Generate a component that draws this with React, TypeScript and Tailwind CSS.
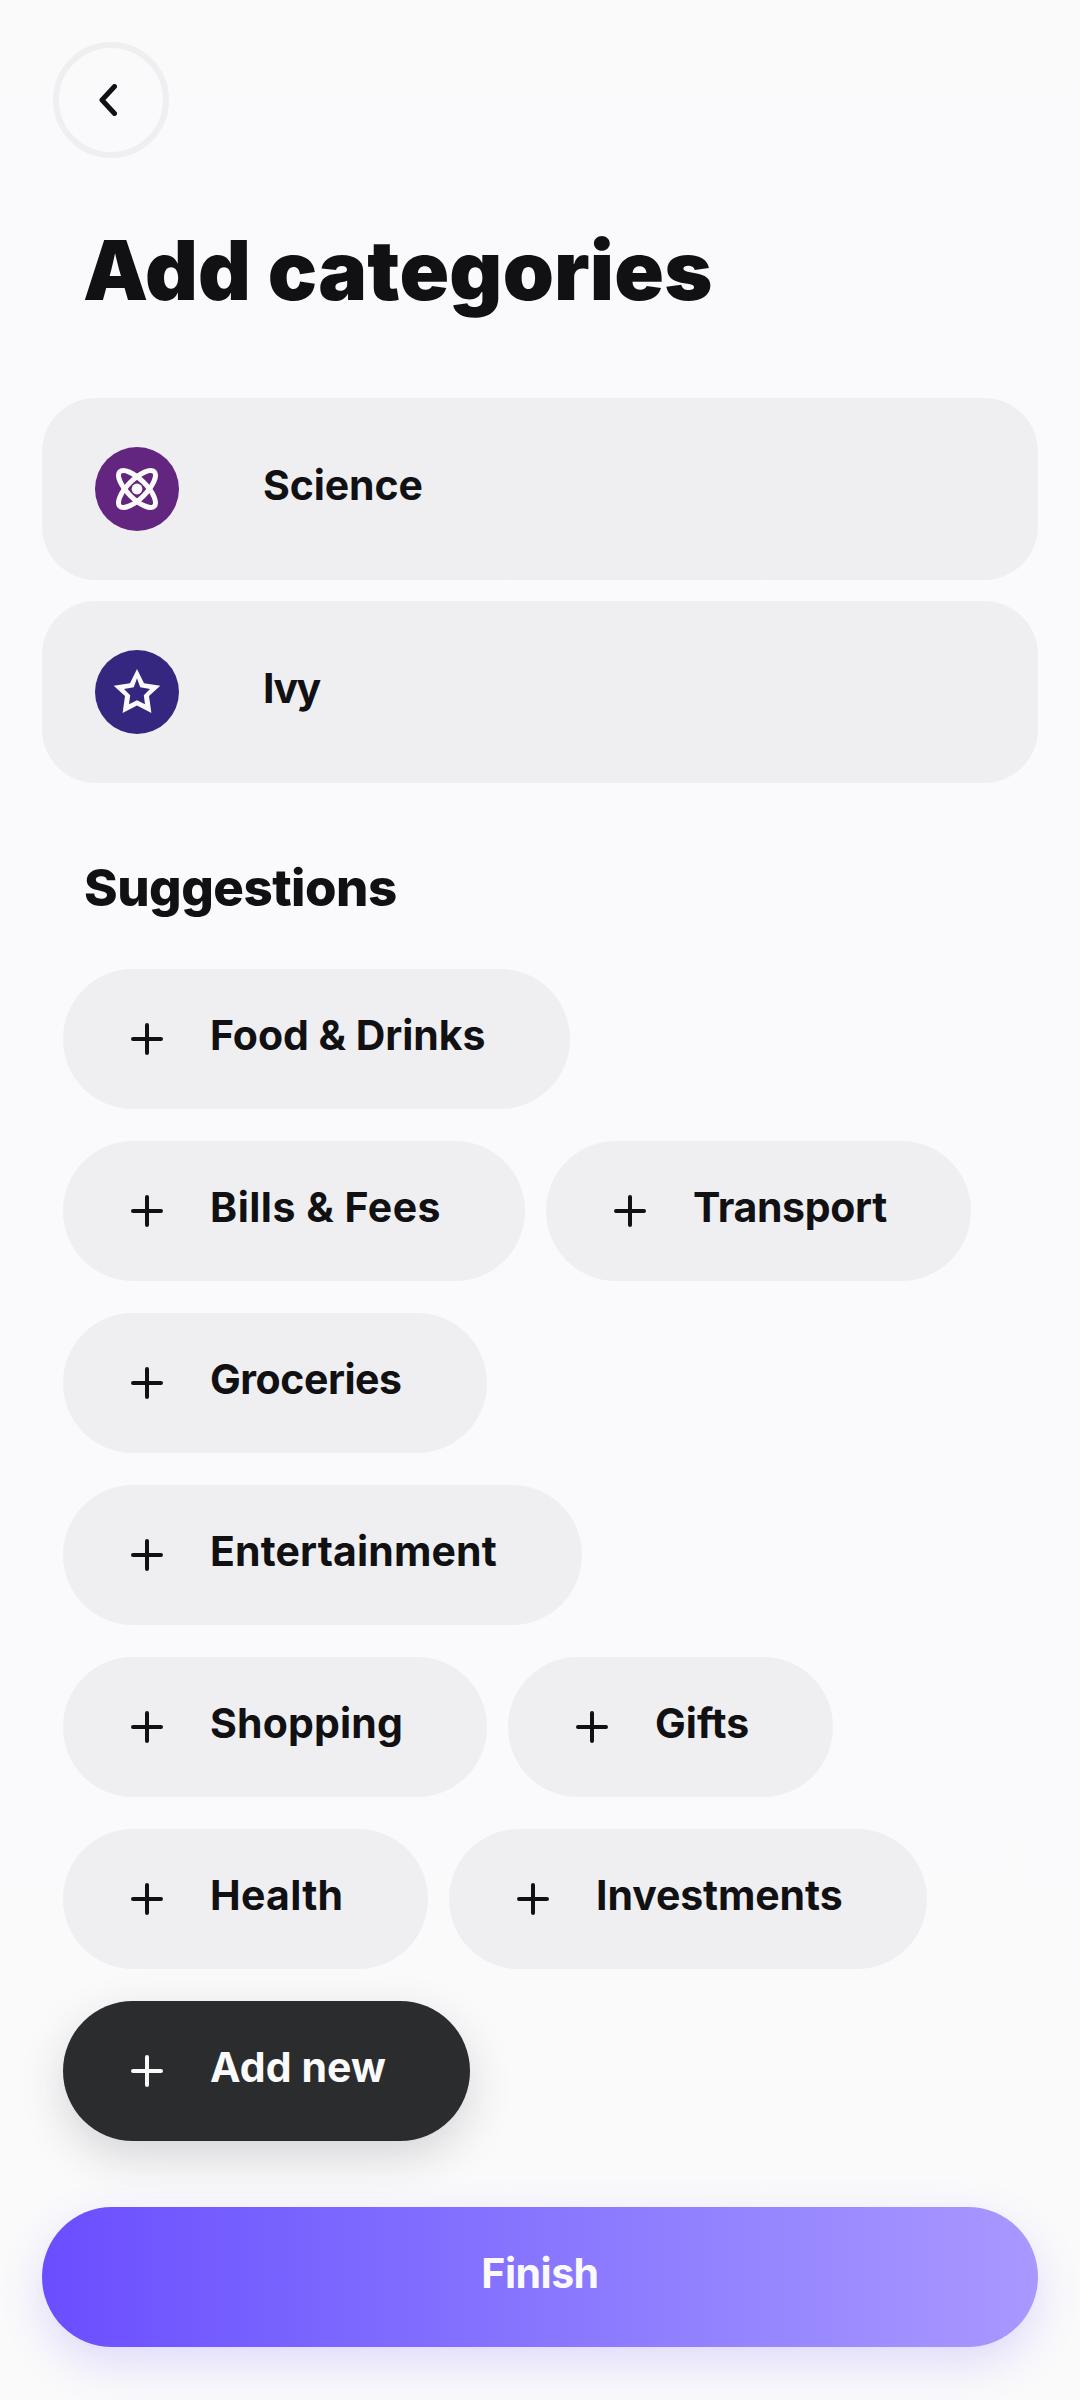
import type { ReactNode } from 'react';

type Item = { label: string; width: string; tracking: string };

const suggestionRows: Item[][] = [
  [{ label: 'Food & Drinks', width: 'w-[507px]', tracking: 'tracking-[-0.05px]' }],
  [
    { label: 'Bills & Fees', width: 'w-[462px]', tracking: 'tracking-[0.5px]' },
    { label: 'Transport', width: 'w-[425px]', tracking: 'tracking-[-0.35px]' },
  ],
  [{ label: 'Groceries', width: 'w-[424px]', tracking: 'tracking-[-0.45px]' }],
  [{ label: 'Entertainment', width: 'w-[519px]', tracking: 'tracking-[0.15px]' }],
  [
    { label: 'Shopping', width: 'w-[424px]', tracking: 'tracking-[0.15px]' },
    { label: 'Gifts', width: 'w-[325px]', tracking: 'tracking-[0px]' },
  ],
  [
    { label: 'Health', width: 'w-[365px]', tracking: 'tracking-[0.3px]' },
    { label: 'Investments', width: 'w-[478px]', tracking: 'tracking-[-0.1px]' },
  ],
];

function PlusIcon() {
  return (
    <svg className="size-8 shrink-0" viewBox="0 0 32 32" fill="none" stroke="currentColor" strokeWidth="4" strokeLinecap="round">
      <path d="M16 2v28M2 16h28" />
    </svg>
  );
}

function AtomIcon() {
  return (
    <svg className="size-full" viewBox="0 0 84 84" fill="none" stroke="#fafafa" strokeWidth="5">
      <ellipse cx="42" cy="42" rx="24.4" ry="9.4" transform="rotate(45 42 42)" />
      <ellipse cx="42" cy="42" rx="24.4" ry="9.4" transform="rotate(-45 42 42)" />
      <circle cx="42" cy="42" r="5.4" fill="#fafafa" stroke="none" />
    </svg>
  );
}

function StarIcon() {
  return (
    <svg className="size-full" viewBox="0 0 84 84" fill="#fafafa" fillRule="evenodd">
      <path d="M42 19L49 33.2L65.3 35.7L54 46L56.4 63L42 55.6L27.6 63L30 46L18.7 35.7L35 33.2ZM42 28.3L38.8 37.3L29 39L35.2 45.3L34 54.3L42 50.3L50 54.3L48.8 45.3L55 39L45.2 37.3Z" />
    </svg>
  );
}

function Category({ label, color, tracking, icon }: { label: string; color: string; tracking: string; icon: ReactNode }) {
  return (
    <div className="flex h-[182px] items-center gap-[84px] rounded-[54px] bg-[#efeff1] pl-[53px]">
      <span className={`size-[84px] rounded-full ${color}`}>{icon}</span>
      <span className={`pb-[6px] text-[41px] font-bold ${tracking}`}>{label}</span>
    </div>
  );
}

function Chip({ label, width, tracking, dark = false }: Item & { dark?: boolean }) {
  return (
    <button
      className={`flex h-[140px] items-center gap-[47px] rounded-full pl-[68px] ${width} ${
        dark ? 'bg-[#2b2c2e] text-[#fafafa] shadow-[0_16px_44px_rgba(43,44,46,0.17)]' : 'bg-[#efeff1]'
      }`}
    >
      <PlusIcon />
      <span className={`pb-[6px] text-[41px] font-bold whitespace-nowrap ${tracking}`}>{label}</span>
    </button>
  );
}

export default function App() {
  return (
    <main className="flex h-[2400px] w-[1080px] flex-col overflow-hidden bg-linear-to-b from-[#fafafb] via-[#fafafd] via-15% to-[#fafafb] px-[42px] pt-[42px] font-['Inter',sans-serif] text-[#111114]">
      <button className="ml-[11px] flex size-[116px] shrink-0 items-center justify-center rounded-full border-[6px] border-[#efeff1]">
        <svg className="-ml-[6px] h-8 w-[18px]" viewBox="0 0 18 32" fill="none" stroke="currentColor" strokeWidth="5" strokeLinecap="round" strokeLinejoin="round">
          <path d="M15.5 2.5L3 16L15.5 29.5" />
        </svg>
      </button>

      <h1 className="mt-[56px] ml-[41px] text-[82px] leading-[114px] font-black tracking-[0.2px] whitespace-nowrap">
        Add categories
      </h1>

      <section className="mt-[70px] flex flex-col gap-[21px]">
        <Category label="Science" color="bg-[#622680]" tracking="tracking-[-0.1px]" icon={<AtomIcon />} />
        <Category label="Ivy" color="bg-[#352680]" tracking="tracking-[-1.5px]" icon={<StarIcon />} />
      </section>

      <h2 className="mt-[69px] ml-[42px] text-[51px] leading-[72px] font-extrabold tracking-[-0.5px]">Suggestions</h2>

      <section className="mt-[45px] flex flex-col gap-8 pl-[21px]">
        {suggestionRows.map((row) => (
          <div key={row[0].label} className="flex gap-[21px]">
            {row.map((item) => (
              <Chip key={item.label} {...item} />
            ))}
          </div>
        ))}
        <Chip label="Add new" width="w-[407px]" tracking="tracking-[0.1px]" dark />
      </section>

      <button className="mt-[66px] flex h-[140px] shrink-0 items-center justify-center rounded-full bg-linear-to-r from-[#6b4dff] to-[#a998ff] text-[#fafafa] shadow-[0_16px_44px_rgba(92,61,245,0.17)]">
        <span className="pb-[6px] text-[41px] font-bold tracking-[-0.5px]">Finish</span>
      </button>
    </main>
  );
}
